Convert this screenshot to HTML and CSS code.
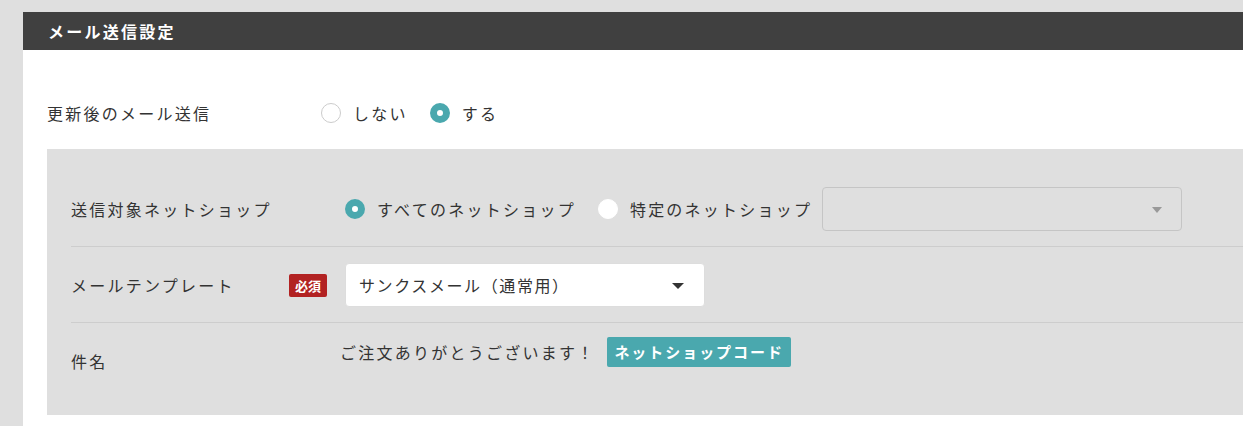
FILE: index.html
```html
<!DOCTYPE html>
<html lang="ja">

<head>
    <meta charset="utf-8">
    <title>メール送信設定</title>
    <link rel="stylesheet" href="styles.css">
</head>

<body>
    <section class="card">
        <h2 class="card-title">メール送信設定</h2>
        <div class="card-body">
            <div class="top-row">
                <div class="label">更新後のメール送信</div>
                <div class="options">
                    <label class="radio"><input type="radio" name="send_mail" value="0"><span>しない</span></label>
                    <label class="radio"><input type="radio" name="send_mail" value="1" checked><span>する</span></label>
                </div>
            </div>

            <div class="panel">
                <div class="row">
                    <div class="label">送信対象ネットショップ</div>
                    <div class="options">
                        <label class="radio"><input type="radio" name="target" value="all" checked><span>すべてのネットショップ</span></label>
                        <label class="radio last"><input type="radio" name="target" value="some"><span>特定のネットショップ</span></label>
                        <div class="select-wrap disabled">
                            <select disabled>
                                <option></option>
                            </select>
                        </div>
                    </div>
                </div>
                <div class="row">
                    <div class="label">メールテンプレート <span class="required">必須</span></div>
                    <div class="options">
                        <div class="select-wrap">
                            <select>
                                <option>サンクスメール（通常用）</option>
                            </select>
                        </div>
                    </div>
                </div>
                <div class="row subject-row">
                    <div class="label">件名</div>
                    <div class="options">
                        <span class="subject">ご注文ありがとうございます！</span>
                        <span class="tag">ネットショップコード</span>
                    </div>
                </div>
            </div>
        </div>
    </section>
</body>

</html>
```

FILE: styles.css
```css
body {
    font-family: "Noto Sans CJK JP", "Noto Sans", sans-serif;
    margin: 0;
    padding: 12px 0 0 23px;
    background: #dfdfdf;
    color: #333;
    font-size: 16px;
    letter-spacing: 0.14em;
    overflow: hidden;
}

.card {
    background: white;
    min-height: 420px;
}

.card-title {
    margin: 0;
    height: 38px;
    line-height: 38px;
    padding-left: 25px;
    background: #404040;
    color: white;
    font-size: 16px;
    font-weight: bold;
    letter-spacing: 0.14em;
}

.card-body {
    padding: 43px 0 0 24px;
}

.top-row {
    display: flex;
    align-items: center;
    height: 40px;
    margin-bottom: 16px;
}

.label {
    width: 274px;
    flex-shrink: 0;
    display: flex;
    align-items: center;
}

.options {
    display: flex;
    align-items: center;
}

/* radio buttons */
.radio {
    display: flex;
    align-items: center;
    margin-right: 22px;
    cursor: pointer;
}

.radio.last {
    margin-right: 10px;
}

.radio input {
    appearance: none;
    -webkit-appearance: none;
    width: 20px;
    height: 20px;
    margin: 0 12px 0 0;
    border-radius: 50%;
    border: 1px solid #ccc;
    background: white;
}

.radio input:checked {
    border: 7px solid #4aa8ae;
}

.panel .radio input {
    border-color: white;
}

.panel .radio input:checked {
    border-color: #4aa8ae;
}

/* grey block */
.panel {
    background: #dfdfdf;
    padding: 22px 0 0 24px;
}

.row {
    display: flex;
    align-items: center;
    padding: 16px 0 15px;
    border-bottom: 1px solid #cdcdcd;
}

.row .label {
    justify-content: space-between;
    padding-right: 18px;
    box-sizing: border-box;
}

.subject-row {
    align-items: flex-start;
    padding: 14px 0 42px;
    border-bottom: none;
}

.subject-row .label {
    margin-top: 12px;
    height: 24px;
}

.required {
    background: #b22222;
    color: white;
    font-size: 13px;
    font-weight: bold;
    letter-spacing: 0;
    padding: 0 6px;
    height: 23px;
    line-height: 23px;
    border-radius: 2px;
}

/* select boxes */
.select-wrap {
    position: relative;
    width: 360px;
    height: 44px;
}

.select-wrap::after {
    content: "";
    position: absolute;
    right: 21px;
    top: 20px;
    border-left: 6px solid transparent;
    border-right: 6px solid transparent;
    border-top: 6px solid #333;
}

.select-wrap.disabled::after {
    border-left-width: 5px;
    border-right-width: 5px;
    border-top: 6px solid #999;
    right: 20px;
}

.select-wrap select {
    appearance: none;
    -webkit-appearance: none;
    width: 100%;
    height: 100%;
    padding: 0 13px;
    font: inherit;
    letter-spacing: 0.1em;
    color: #333;
    background: white;
    border: 1px solid #ddd;
    border-radius: 4px;
}

.select-wrap select:disabled {
    background: #dfdfdf;
    border-color: #bbb;
}

.subject {
    margin: 0 12px 0 -5px;
}

.tag {
    background: #4aa8ae;
    color: white;
    font-size: 15px;
    font-weight: bold;
    letter-spacing: 0.13em;
    height: 30px;
    line-height: 30px;
    padding: 0 7px;
    border-radius: 2px;
}
```
